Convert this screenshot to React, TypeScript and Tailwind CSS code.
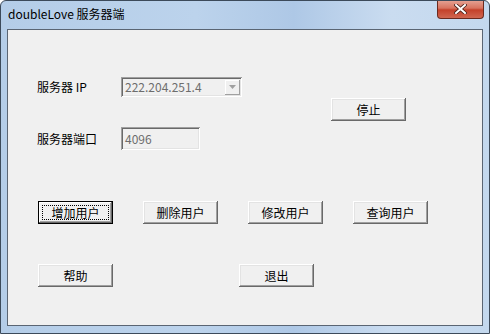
import React from "react";

const font = { fontFamily: '"Noto Sans CJK SC", "Noto Sans", sans-serif' };

function Btn({ label, isDefault = false }: { label: string; isDefault?: boolean }) {
  if (isDefault) {
    return (
      <div className="w-[75px] h-[23px] border border-black bg-[#f0f0f0] shadow-[inset_-1px_-1px_#696969,inset_1px_1px_#fff,inset_-2px_-2px_#a0a0a0] p-[3px]">
        <div className="h-full w-full border border-dotted border-black flex items-center justify-center text-[12px] leading-none text-black">
          {label}
        </div>
      </div>
    );
  }
  return (
    <div className="w-[75px] h-[23px] bg-[#f0f0f0] shadow-[inset_-1px_-1px_#696969,inset_1px_1px_#fff,inset_-2px_-2px_#a0a0a0,inset_2px_2px_#e3e3e3] flex items-center justify-center text-[12px] leading-none text-black">
      {label}
    </div>
  );
}

export default function App() {
  return (
    <div
      style={font}
      className="w-[490px] h-[334px] flex flex-col bg-[linear-gradient(90deg,#b4cde8_0%,#bcd3ec_40%,#aec8e6_60%,#cadcf0_80%,#c3d8ee_100%)] border border-[#3c4a5a] rounded-t-[6px] overflow-hidden"
    >
      {/* Title bar */}
      <div className="h-[28px] flex items-start justify-between">
        <div className="pl-[7px] pt-[5px] text-[12px] leading-[16px] text-black">doubleLove 服务器端</div>
        <div className="mr-[5px] w-[47px] h-[19px] -mt-[1px] rounded-b-[4px] border border-[#6b2a1f] border-t-0 bg-[linear-gradient(180deg,#e6a597_0%,#d8735f_45%,#c4412a_55%,#d06650_100%)] flex items-center justify-center">
          <svg width="13" height="10" viewBox="0 0 13 10">
            <path d="M2 1 L11 9 M11 1 L2 9" stroke="#4a2019" strokeWidth="3.6" strokeLinecap="square" />
            <path d="M2 1 L11 9 M11 1 L2 9" stroke="#ffffff" strokeWidth="2" strokeLinecap="square" />
          </svg>
        </div>
      </div>
      {/* Client area */}
      <div className="flex-1 ml-[6px] mr-[6px] mb-[7px] border border-[#5a6573] bg-[#f0f0f0] pl-[30px] pt-[47px] text-[12px] text-black">
        <div className="flex">
          <div className="w-[293px] flex flex-col">
            <div className="flex items-center h-[20px]">
              <div className="w-[83px] -ml-[1px] mr-[1px] leading-none">服务器 IP</div>
              <div className="w-[121px] h-[20px] bg-[#f0f0f0] shadow-[inset_1px_1px_#a0a0a0,inset_-1px_-1px_#fff,inset_2px_2px_#696969,inset_-2px_-2px_#e3e3e3] flex items-center justify-between pl-[4px] pr-[2px]">
                <span className="text-[#6d6d6d] leading-none">222.204.251.4</span>
                <div className="w-[15px] h-[15px] shadow-[inset_-1px_-1px_#a0a0a0,inset_1px_1px_#fff] bg-[#f0f0f0] flex items-center justify-center">
                  <svg width="7" height="4" viewBox="0 0 7 4">
                    <path d="M0 0 H7 L3.5 4 Z" fill="#a0a0a0" />
                  </svg>
                </div>
              </div>
            </div>
            <div className="flex items-center h-[23px] mt-[30px]">
              <div className="w-[83px] -ml-[1px] mr-[1px] leading-none">服务器端口</div>
              <div className="w-[79px] h-[23px] bg-[#f0f0f0] shadow-[inset_1px_1px_#a0a0a0,inset_-1px_-1px_#fff,inset_2px_2px_#696969,inset_-2px_-2px_#e3e3e3] flex items-center pl-[4px]">
                <span className="text-[#6d6d6d] leading-none">4096</span>
              </div>
            </div>
          </div>
          <div className="mt-[21px]">
            <Btn label="停止" />
          </div>
        </div>
        <div className="flex gap-[30px] mt-[51px]">
          <Btn label="增加用户" isDefault />
          <Btn label="删除用户" />
          <Btn label="修改用户" />
          <Btn label="查询用户" />
        </div>
        <div className="flex gap-[126px] mt-[40px]">
          <Btn label="帮助" />
          <Btn label="退出" />
        </div>
      </div>
    </div>
  );
}
